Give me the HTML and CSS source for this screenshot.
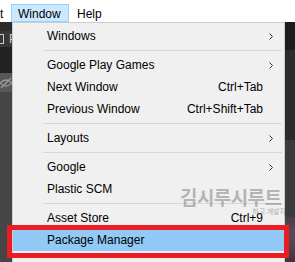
FILE: index.html
```html
<!DOCTYPE html>
<html>
<head>
<meta charset="utf-8">
<link rel="stylesheet" href="styles.css">
</head>
<body>
<div class="menubar">
  <span class="mb-item mb-cut">t</span>
  <span class="mb-item mb-active">Window</span>
  <span class="mb-item">Help</span>
</div>
<div class="main">
  <div class="side-left">
    <div class="sl-a"></div>
    <div class="sl-b"><span class="chk"></span><span class="sl-p">P</span></div>
    <div class="sl-c"></div>
    <div class="sl-d">
      <svg width="12" height="12" viewBox="0 0 12 12"><path d="M0 6 Q6 0 12 6 Q6 12 0 6Z" fill="none" stroke="#9a9a9a" stroke-width="1.2"/><path d="M1 11 L11 1" stroke="#9a9a9a" stroke-width="1.2"/></svg>
    </div>
    <div class="sl-e"></div>
  </div>
  <div class="menu">
    <div class="item"><span class="label">Windows</span><svg class="arrow" width="4" height="7" viewBox="0 0 4 7"><path d="M0.5 0.5 L3.5 3.5 L0.5 6.5" fill="none" stroke="#333" stroke-width="1"/></svg></div>
    <div class="sep"></div>
    <div class="item"><span class="label">Google Play Games</span><svg class="arrow" width="4" height="7" viewBox="0 0 4 7"><path d="M0.5 0.5 L3.5 3.5 L0.5 6.5" fill="none" stroke="#333" stroke-width="1"/></svg></div>
    <div class="item"><span class="label">Next Window</span><span class="key">Ctrl+Tab</span></div>
    <div class="item"><span class="label">Previous Window</span><span class="key">Ctrl+Shift+Tab</span></div>
    <div class="sep"></div>
    <div class="item"><span class="label">Layouts</span><svg class="arrow" width="4" height="7" viewBox="0 0 4 7"><path d="M0.5 0.5 L3.5 3.5 L0.5 6.5" fill="none" stroke="#333" stroke-width="1"/></svg></div>
    <div class="sep"></div>
    <div class="item"><span class="label">Google</span><svg class="arrow" width="4" height="7" viewBox="0 0 4 7"><path d="M0.5 0.5 L3.5 3.5 L0.5 6.5" fill="none" stroke="#333" stroke-width="1"/></svg></div>
    <div class="item"><span class="label">Plastic SCM</span></div>
    <div class="sep"></div>
    <div class="item"><span class="label">Asset Store</span><span class="key">Ctrl+9</span></div>
    <div class="item item-hl"><span class="label">Package Manager</span></div>
  </div>
  <div class="side-right">
    <div class="sr-a"></div>
    <div class="sr-b"></div>
    <div class="sr-c"></div>
    <div class="sr-d"></div>
  </div>
</div>
<div class="watermark">
  <div class="wm-big">김시루시루트</div>
  <div class="wm-small">하고 개발자</div>
</div>
<div class="redbox"></div>
</body>
</html>
```
FILE: styles.css
```css
html, body {
  margin: 0;
  padding: 0;
}
body {
  width: 295px;
  height: 262px;
  overflow: hidden;
  background: #444;
  font-family: "Liberation Sans", Arial, sans-serif;
  font-size: 12px;
  color: #000;
  position: relative;
}
.menubar {
  height: 22px;
  background: #fff;
  display: flex;
  align-items: flex-end;
}
.mb-item {
  height: 18px;
  line-height: 18px;
  box-sizing: border-box;
  padding: 0 7px;
  border: 1px solid transparent;
  border-bottom: 0;
}
.mb-cut {
  padding: 0;
  margin-left: -1px;
  width: 12px;
}
.mb-active {
  background: #cce8ff;
  border-color: #99d1ff;
  border-bottom: 1px solid #99d1ff;
  padding: 0 6px;
  width: 58px;
}
.main {
  display: flex;
  height: 240px;
}
.side-left {
  width: 12px;
  display: flex;
  flex-direction: column;
  overflow: hidden;
}
.sl-a { height: 9px; background: #2b2b2b; }
.sl-b {
  height: 16px;
  background: #383838;
  display: flex;
  align-items: center;
  gap: 2px;
}
.chk {
  width: 8px;
  height: 10px;
  margin-left: -4px;
  border: 1px solid #c8c8c8;
  box-sizing: border-box;
  flex: none;
}
.sl-p {
  color: #c8c8c8;
  font-size: 12px;
  line-height: 12px;
  margin-left: 3px;
}
.sl-c { height: 26px; background: #222; }
.sl-d {
  height: 19px;
  background: #575757;
  display: flex;
  align-items: center;
}
.sl-e { flex: 1; background: #454545; }
.menu {
  width: 273px;
  box-sizing: border-box;
  background: #f0f0f0;
  border: 1px solid #cccccc;
  border-bottom: 0;
  padding-top: 2px;
}
.item {
  height: 22px;
  display: flex;
  align-items: center;
  padding-left: 34px;
  padding-right: 11px;
}
.label {
  flex: 1;
  white-space: nowrap;
}
.key {
  margin-right: 10px;
  white-space: nowrap;
}
.arrow {
  display: block;
  margin-right: 0;
}
.item-hl {
  background: #91c9f7;
}
.sep {
  height: 7px;
  box-sizing: border-box;
  padding-top: 3px;
  margin-left: 30px;
  margin-right: 2px;
}
.sep::before {
  content: "";
  display: block;
  height: 1px;
  background: #d7d7d7;
}
.side-right {
  flex: 1;
  display: flex;
  flex-direction: column;
}
.sr-a { height: 28px; background: #1c1c1c; }
.sr-b { height: 90px; background: #2b2b2b; }
.sr-c { height: 77px; background: #3b3b3b; }
.sr-d { flex: 1; background: linear-gradient(180deg, #4a3d49, #5d4a58 40%, #3e3440); }
.watermark {
  position: absolute;
  left: 180px;
  top: 186px;
  width: 112px;
  pointer-events: none;
}
.wm-big {
  font-family: "Noto Sans CJK KR", sans-serif;
  font-weight: 700;
  font-size: 19px;
  line-height: 22px;
  color: rgba(120, 120, 120, 0.5);
  letter-spacing: -0.6px;
  white-space: nowrap;
}
.wm-small {
  font-family: "Noto Sans CJK KR", sans-serif;
  font-size: 7px;
  line-height: 7px;
  color: rgba(110, 110, 110, 0.55);
  text-align: right;
  margin-right: 6px;
  white-space: nowrap;
}
.redbox {
  position: absolute;
  left: 7px;
  top: 225px;
  width: 282px;
  height: 33px;
  box-sizing: border-box;
  border: 5px solid #ec1c24;
}
```
